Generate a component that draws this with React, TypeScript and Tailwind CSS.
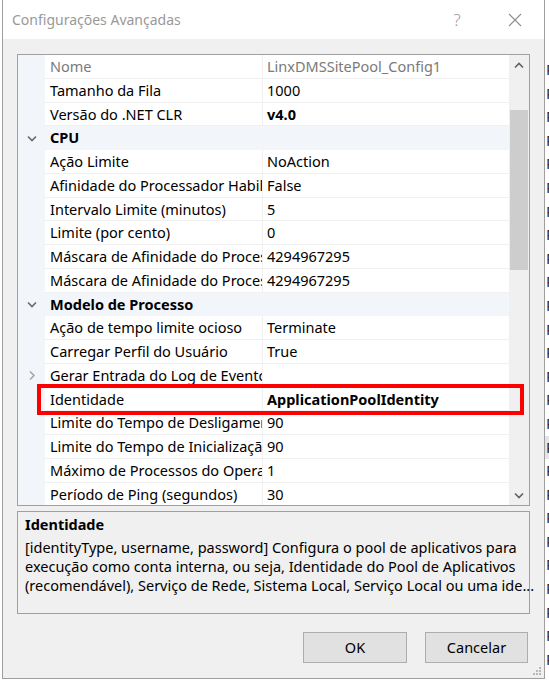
import React from "react";

type Prop = {
  name: string;
  value?: string;
  bold?: boolean;
  muted?: boolean;
  expandable?: boolean;
};
type Item = { category: string } | Prop;

const items: Item[] = [
  { name: "Nome", value: "LinxDMSSitePool_Config1", muted: true },
  { name: "Tamanho da Fila", value: "1000" },
  { name: "Versão do .NET CLR", value: "v4.0", bold: true },
  { category: "CPU" },
  { name: "Ação Limite", value: "NoAction" },
  { name: "Afinidade do Processador Habilitada", value: "False" },
  { name: "Intervalo Limite (minutos)", value: "5" },
  { name: "Limite (por cento)", value: "0" },
  { name: "Máscara de Afinidade do Processador", value: "4294967295" },
  { name: "Máscara de Afinidade do Processador (64 bits)", value: "4294967295" },
  { category: "Modelo de Processo" },
  { name: "Ação de tempo limite ocioso", value: "Terminate" },
  { name: "Carregar Perfil do Usuário", value: "True" },
  { name: "Gerar Entrada do Log de Eventos de Processo", value: "", expandable: true },
  { name: "Identidade", value: "ApplicationPoolIdentity", bold: true },
  { name: "Limite do Tempo de Desligamento (segundos)", value: "90" },
  { name: "Limite do Tempo de Inicialização (segundos)", value: "90" },
  { name: "Máximo de Processos do Operador", value: "1" },
  { name: "Período de Ping (segundos)", value: "30" },
];

const Chevron = ({ dir, color = "#6b6b6b" }: { dir: "up" | "down" | "right"; color?: string }) => {
  const d =
    dir === "down" ? "M1 1.5 L5 5.5 L9 1.5" : dir === "up" ? "M1 5.5 L5 1.5 L9 5.5" : "M2 0.5 L6 4.5 L2 8.5";
  const [w, h] = dir === "right" ? [8, 9] : [10, 7];
  return (
    <svg width={w} height={h} viewBox={`0 0 ${w} ${h}`} fill="none">
      <path d={d} stroke={color} strokeWidth="1.6" />
    </svg>
  );
};

const GridRow = ({ item }: { item: Item }) => {
  if ("category" in item) {
    return (
      <div className="flex h-[23.75px] shrink-0 items-center bg-[#f2f5fa]">
        <div className="flex w-[27px] shrink-0 justify-center pl-[1px]">
          <Chevron dir="down" />
        </div>
        <span className="pl-[5px] font-bold">{item.category}</span>
      </div>
    );
  }
  return (
    <div className="flex h-[23.75px] shrink-0">
      <div className="flex w-[27px] shrink-0 items-center justify-center bg-[#f2f5fa] pl-[1px]">
        {item.expandable && <Chevron dir="right" color="#a8a8a8" />}
      </div>
      <div className="flex flex-1 border-b border-[#f0f0f0] bg-white leading-[22.75px]">
        <div
          className={`w-[218px] shrink-0 overflow-hidden whitespace-nowrap border-r border-[#f0f0f0] pl-[5px] ${
            item.muted ? "text-[#7a7a7a]" : ""
          }`}
        >
          {item.name}
        </div>
        <div
          className={`flex-1 overflow-hidden whitespace-nowrap pl-[4px] ${item.bold ? "font-bold" : ""} ${
            item.muted ? "text-[#7a7a7a]" : ""
          }`}
        >
          {item.value}
        </div>
      </div>
    </div>
  );
};

const Scrollbar = () => (
  <div className="flex w-[20px] shrink-0 flex-col bg-[#f0f0f0]">
    <div className="flex h-[20px] items-center justify-center">
      <Chevron dir="up" color="#606060" />
    </div>
    <div className="h-[35px]" />
    <div className="mx-[1px] h-[160px] bg-[#cdcdcd]" />
    <div className="flex-1" />
    <div className="flex h-[20px] items-center justify-center">
      <Chevron dir="down" color="#606060" />
    </div>
  </div>
);

const BackgroundStrip = () => (
  <div className="flex-1 overflow-hidden bg-white pt-[58px] text-[15px] leading-[23.6px] text-[#3a1c1c]">
    {Array.from({ length: 26 }).map((_, i) => (
      <div key={i} className={`whitespace-nowrap pl-[1px] ${i === 16 ? "bg-[#e5e5e5]" : ""}`}>
        Pool
      </div>
    ))}
  </div>
);

export default function App() {
  return (
    <div className="flex h-[680px] w-[549px] overflow-hidden bg-white font-['Noto_Sans',sans-serif] text-[14.5px] text-black">
      <div className="w-[2px] shrink-0 bg-white" />
      <div className="relative flex h-[679px] w-[543px] shrink-0 flex-col border-x border-b border-[#9e9e9e] bg-[#f0f0f0]">
        {/* Title bar */}
        <div className="flex h-[39px] shrink-0 items-center bg-white">
          <span className="flex-1 pl-[9px] text-[14px] text-[#999999]">Configurações Avançadas</span>
          <div className="flex h-full w-[58px] items-center justify-center text-[17px] font-light text-[#9a9a9a]">?</div>
          <div className="flex h-full w-[58px] items-center justify-center">
            <svg width="14" height="14" viewBox="0 0 14 14">
              <path d="M1 1 L13 13 M13 1 L1 13" stroke="#8f8f8f" strokeWidth="1.1" />
            </svg>
          </div>
        </div>

        {/* Content */}
        <div className="flex flex-1 flex-col px-[14px] pt-[15px]">
          {/* Property grid */}
          <div className="relative flex h-[452px] border border-[#a0a0a0] bg-white">
            <div className="flex flex-1 flex-col overflow-hidden">
              {items.map((it, i) => (
                <GridRow key={i} item={it} />
              ))}
            </div>
            <Scrollbar />
            <div className="absolute left-[19px] top-[329px] h-[31px] w-[487px] border-[4px] border-[#ff0000]" />
          </div>

          {/* Description */}
          <div className="mt-[5px] h-[103px] border border-[#a0a0a0] bg-[#f0f0f0] pl-[7px] pt-[2px]">
            <div className="font-bold leading-[20px]">Identidade</div>
            <div className="mt-[4px] whitespace-nowrap leading-[19px]">
              <div>[identityType, username, password] Configura o pool de aplicativos para</div>
              <div>execução como conta interna, ou seja, Identidade do Pool de Aplicativos</div>
              <div>(recomendável), Serviço de Rede, Sistema Local, Serviço Local ou uma ide...</div>
            </div>
          </div>

          {/* Buttons */}
          <div className="mt-[18px] flex justify-end gap-[18px] pr-[2px]">
            <button className="h-[31px] w-[104px] border border-[#adadad] bg-[#e1e1e1]">OK</button>
            <button className="h-[31px] w-[103px] border border-[#adadad] bg-[#e1e1e1]">Cancelar</button>
          </div>
        </div>

        {/* Resize grip */}
        <svg className="absolute bottom-[2px] right-[2px]" width="10" height="10" viewBox="0 0 10 10">
          {[
            [8, 2],
            [8, 5],
            [5, 5],
            [8, 8],
            [5, 8],
            [2, 8],
          ].map(([x, y], i) => (
            <rect key={i} x={x - 1} y={y - 1} width="2" height="2" fill="#b8b8b8" />
          ))}
        </svg>
      </div>
      <BackgroundStrip />
    </div>
  );
}
